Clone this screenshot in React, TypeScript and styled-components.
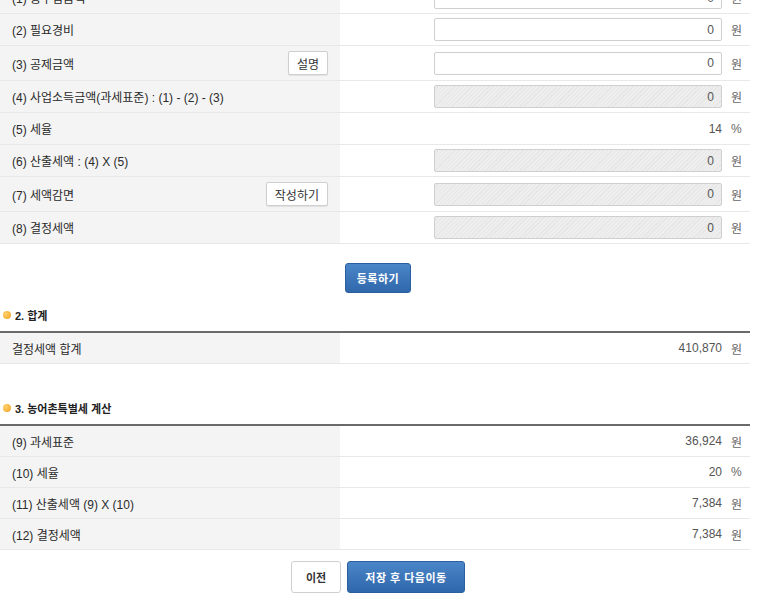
import React from "react";
import styled, { createGlobalStyle } from "styled-components";

const GlobalStyle = createGlobalStyle`
  html, body {
    margin: 0;
    padding: 0;
    background: #fff;
    overflow: hidden;
  }
  body {
    font-family: "Liberation Sans", "Noto Sans CJK KR", "Noto Sans", sans-serif;
    font-size: 12px;
    color: #333;
  }
`;

const Page = styled.div`
  width: 750px;
  margin-top: -18px;
`;

const Table = styled.div`
  display: flex;
  flex-direction: column;
`;

const Row = styled.div<{ $h: number }>`
  display: grid;
  grid-template-columns: 340px 1fr;
  height: ${(p) => p.$h}px;
  box-sizing: border-box;
  border-bottom: 1px solid #e8e8e8;
`;

const LabelCell = styled.div`
  background: #f4f4f4;
  padding: 0 12px;
  display: flex;
  align-items: center;
  justify-content: space-between;
  color: #2a2a2a;
`;

const ValueCell = styled.div`
  display: flex;
  align-items: center;
  justify-content: flex-end;
  padding-right: 7px;
  gap: 9px;
  color: #555;
`;

const Input = styled.div<{ $disabled?: boolean }>`
  width: 288px;
  height: 23px;
  box-sizing: border-box;
  border: 1px solid #cfcfcf;
  border-radius: 2px;
  padding: 0 7px;
  display: flex;
  align-items: center;
  justify-content: flex-end;
  color: #555;
  background: ${(p) =>
    p.$disabled
      ? "repeating-linear-gradient(135deg, #eeeeee 0px, #eeeeee 2px, #e6e6e6 2px, #e6e6e6 3px)"
      : "#fff"};
`;

const Unit = styled.span`
  width: 12px;
  text-align: left;
  color: #666;
`;

const SmallButton = styled.button`
  height: 24px;
  padding: 0 8px;
  border: 1px solid #cfcfcf;
  border-radius: 2px;
  background: #fff;
  font-family: inherit;
  font-size: 12px;
  color: #333;
  box-shadow: 0 1px 1px rgba(0, 0, 0, 0.08);
`;

const CenterBar = styled.div<{ $top: number; $bottom: number }>`
  display: flex;
  justify-content: center;
  gap: 6px;
  padding-left: 6px;
  padding-top: ${(p) => p.$top}px;
  padding-bottom: ${(p) => p.$bottom}px;
`;

const BlueButton = styled.button<{ $w: number; $h: number }>`
  width: ${(p) => p.$w}px;
  height: ${(p) => p.$h}px;
  border: 1px solid #2c5f9e;
  border-radius: 3px;
  background: linear-gradient(#4a86c8, #2f67ab);
  color: #fff;
  font-family: inherit;
  font-size: 11px;
  font-weight: bold;
  letter-spacing: 0.5px;
`;

const WhiteButton = styled.button`
  width: 50px;
  height: 32px;
  border: 1px solid #cfcfcf;
  border-radius: 3px;
  background: #fff;
  font-family: inherit;
  font-size: 11px;
  font-weight: bold;
  color: #333;
`;

const SectionTitle = styled.div`
  display: flex;
  align-items: center;
  gap: 4px;
  padding: 0 0 8px 3px;
  font-size: 11px;
  font-weight: bold;
  color: #222;
  border-bottom: 2px solid #6a6a6a;
`;

const Bullet = styled.span`
  width: 8px;
  height: 8px;
  border-radius: 50%;
  background: radial-gradient(circle at 35% 35%, #ffd16a, #f0a020);
`;

const Gap = styled.div<{ $h: number }>`
  height: ${(p) => p.$h}px;
`;

type Item = {
  label: string;
  value: string;
  unit: string;
  input?: "on" | "off";
  button?: string;
};

const topRows: Item[] = [
  { label: "(1) 총수입금액", value: "0", unit: "원", input: "on" },
  { label: "(2) 필요경비", value: "0", unit: "원", input: "on" },
  { label: "(3) 공제금액", value: "0", unit: "원", input: "on", button: "설명" },
  { label: "(4) 사업소득금액(과세표준) : (1) - (2) - (3)", value: "0", unit: "원", input: "off" },
  { label: "(5) 세율", value: "14", unit: "%" },
  { label: "(6) 산출세액 : (4) X (5)", value: "0", unit: "원", input: "off" },
  { label: "(7) 세액감면", value: "0", unit: "원", input: "off", button: "작성하기" },
  { label: "(8) 결정세액", value: "0", unit: "원", input: "off" },
];

const ruralRows: Item[] = [
  { label: "(9) 과세표준", value: "36,924", unit: "원" },
  { label: "(10) 세율", value: "20", unit: "%" },
  { label: "(11) 산출세액 (9) X (10)", value: "7,384", unit: "원" },
  { label: "(12) 결정세액", value: "7,384", unit: "원" },
];

const renderRow = (r: Item, h = 32) => (
  <Row key={r.label} $h={r.button ? 35 : h}>
    <LabelCell>
      <span>{r.label}</span>
      {r.button && <SmallButton>{r.button}</SmallButton>}
    </LabelCell>
    <ValueCell>
      {r.input ? <Input $disabled={r.input === "off"}>{r.value}</Input> : <span>{r.value}</span>}
      <Unit>{r.unit}</Unit>
    </ValueCell>
  </Row>
);

export default function App() {
  return (
    <Page>
      <GlobalStyle />
      <Table>{topRows.map((r) => renderRow(r))}</Table>

      <CenterBar $top={19} $bottom={14}>
        <BlueButton $w={66} $h={30}>등록하기</BlueButton>
      </CenterBar>

      <SectionTitle>
        <Bullet />
        2. 합계
      </SectionTitle>
      <Table>{renderRow({ label: "결정세액 합계", value: "410,870", unit: "원" }, 31)}</Table>

      <Gap $h={36} />
      <SectionTitle>
        <Bullet />
        3. 농어촌특별세 계산
      </SectionTitle>
      <Table>{ruralRows.map((r) => renderRow(r, 31))}</Table>

      <CenterBar $top={11} $bottom={10}>
        <WhiteButton>이전</WhiteButton>
        <BlueButton $w={118} $h={32}>저장 후 다음이동</BlueButton>
      </CenterBar>
    </Page>
  );
}
